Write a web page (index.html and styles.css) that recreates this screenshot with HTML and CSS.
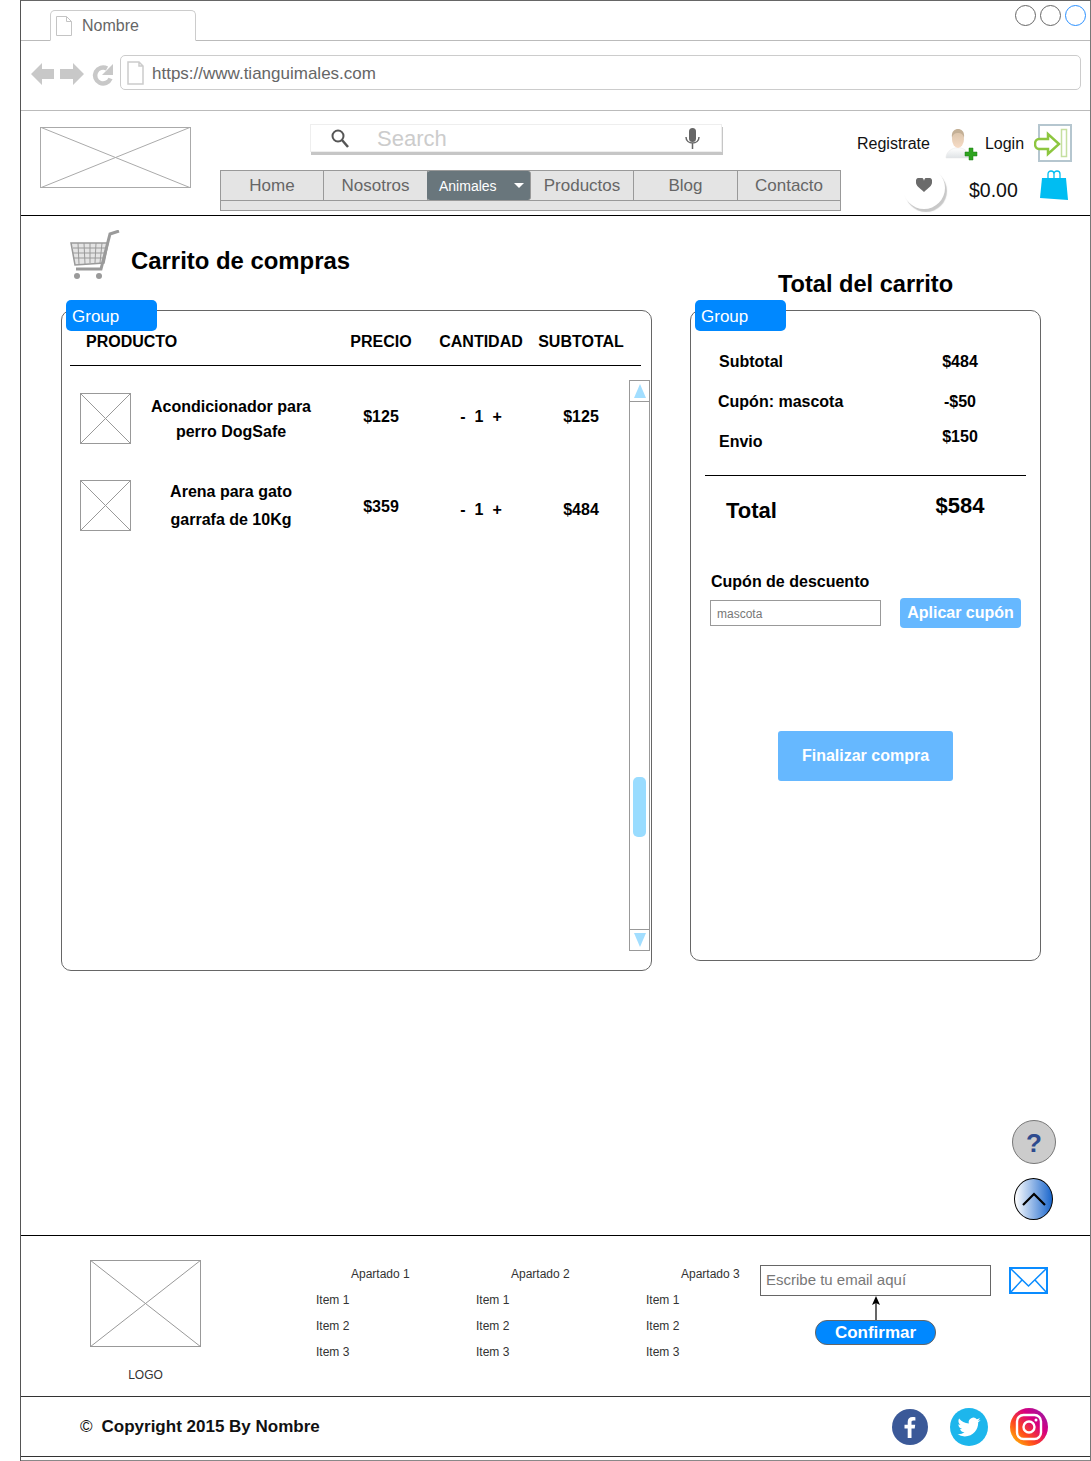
FILE: index.html
```html
<!DOCTYPE html>
<html>
   <head>
      <meta charset="utf-8">
      <title>Carrito de compras</title>
      <link rel="stylesheet" href="styles.css">
   </head>
   <body>
      <div class="page">
         <div class="tabbar">
            <div class="tab">
               <svg class="page-icon" width="16" height="20" viewBox="0 0 16 20"><path d="M.5.5h10l5 5v14H.5zM10.500.5v5h5" fill="#fff" stroke="#c4c4c4"/></svg>
               <span>Nombre</span>
            </div>
            <div class="winbtns">
               <span class="winbtn"></span>
               <span class="winbtn"></span>
               <span class="winbtn winbtn-blue"></span>
            </div>
         </div>

         <div class="addressbar">
            <svg class="navicons" width="83" height="26" viewBox="0 0 83 26">
               <path d="M0 13 11 2v6h12v10H11v6z" fill="#c8c8c8"/>
               <path d="M53 13 42 2v6H29v10h13v6z" fill="#c8c8c8"/>
               <path d="M79.500 17.500A8 8 0 1 1 76 7.500" fill="none" stroke="#c8c8c8" stroke-width="4.500"/>
               <path d="M82 3v11H71z" fill="#c8c8c8"/>
            </svg>
            <div class="urlbox">
               <svg width="17" height="24" viewBox="0 0 17 24"><path d="M1 1h11l4 4v18H1zM12 1v4h4" fill="#fff" stroke="#ccc" stroke-width="1.500"/></svg>
               <span class="urltext">https://www.tianguimales.com</span>
            </div>
         </div>

         <header class="siteheader">
            <svg class="logo" width="151" height="61" viewBox="0 0 151 61" preserveAspectRatio="none">
               <rect x=".5" y=".5" width="150" height="60" fill="#fff" stroke="#aaa"/>
               <path d="M0 0 151 61M151 0 0 61" stroke="#aaa"/>
            </svg>

            <div class="headercenter">
               <div class="search">
                  <svg width="18" height="19" viewBox="0 0 18 19"><circle cx="7" cy="7" r="5.500" fill="none" stroke="#555" stroke-width="2"/><path d="m11 11 6 7" stroke="#555" stroke-width="2.500"/></svg>
                  <span class="search-text">Search</span>
                  <svg class="mic" width="15" height="21" viewBox="0 0 15 21"><rect x="4" y="0" width="7" height="14" rx="3.500" fill="#666"/><path d="M1 9c0 8 13 8 13 0M7.500 15v6" fill="none" stroke="#666" stroke-width="1.500"/></svg>
               </div>
               <nav class="menu">
                  <div class="menu-row">
                     <a class="menu-item">Home</a>
                     <a class="menu-item">Nosotros</a>
                     <a class="menu-item menu-active">Animales <i class="caret"></i></a>
                     <a class="menu-item">Productos</a>
                     <a class="menu-item">Blog</a>
                     <a class="menu-item">Contacto</a>
                  </div>
               </nav>
            </div>

            <div class="account">
               <div class="account-top">
                  <span class="account-link">Registrate</span>
                  <svg class="user-icon" width="33" height="33" viewBox="0 0 33 33">
                     <defs>
                        <linearGradient id="skin" x1="0" y1="0" x2="0" y2="1"><stop offset="0" stop-color="#d8c2a8"/><stop offset="1" stop-color="#f7dcc6"/></linearGradient>
                        <linearGradient id="shirt" x1="0" y1="0" x2="0" y2="1"><stop offset="0" stop-color="#fff"/><stop offset="1" stop-color="#dfe3e6"/></linearGradient>
                     </defs>
                     <path d="M1 29c0-6 5-9 9-10h6c4 1 8 4 8 10z" fill="url(#shirt)" stroke="#e5e5e5" stroke-width=".500"/>
                     <ellipse cx="13" cy="10" rx="6" ry="9" fill="url(#skin)"/>
                     <path d="M7 9C6 2 10 0 13 0s7 2 6 9c-1-4-3-5-6-5S8 5 7 9z" fill="#c4b096"/>
                     <path d="M24 19h4v4h4v4h-4v4h-4v-4h-4v-4h4z" fill="#2ea31f" stroke="#1f7d14" stroke-width=".500"/>
                  </svg>
                  <span class="account-link login-label">Login</span>
                  <svg class="login-icon" width="38" height="38" viewBox="0 0 38 38">
                     <rect x="5" y="1" width="32" height="36" fill="#fff" stroke="#b5c6cf" stroke-width="2"/>
                     <rect x="27.500" y="5.500" width="5" height="27" fill="#fff" stroke="#c5dfa0" stroke-width="1.500"/>
                     <path d="M1 20c0-3 2-5 4-5h9v-5l11 10-11 10v-5H5c-2 0-4-2-4-5z" fill="#fff" stroke="#8dc63f" stroke-width="2.500"/>
                  </svg>
               </div>
               <div class="account-bottom">
                  <div class="wish">
                     <svg width="16" height="14" viewBox="0 0 18 16" preserveAspectRatio="none"><path d="M9 16C4 11 0 9 0 5a4.500 4.500 0 0 1 9-2 4.500 4.500 0 0 1 9 2c0 4-4 6-9 11z" fill="#6b6b6b"/></svg>
                  </div>
                  <span class="cart-sum">$0.00</span>
                  <svg class="bag" width="28" height="30" viewBox="0 0 28 30">
                     <path d="M2 8h24l2 22L0 28z" fill="#00bdf2"/>
                     <path d="M8 11V4c0-4 6-4 6 0v7M14 11V4c0-4 6-4 6 0v7" fill="none" stroke="#00bdf2" stroke-width="1.300"/>
                  </svg>
               </div>
            </div>
         </header>

         <main class="content">
            <div class="columns">
               <section class="col-cart">
                  <div class="cart-title">
                     <svg width="50" height="50" viewBox="0 0 50 50">
                        <path d="M1 13h37l-4 20-29 2z" fill="#e4e4e4" stroke="#9a9a9a" stroke-width="1.500"/>
                        <path d="M3 18h33M3 23h32M4 28h30M8 13l1 21M14 13l1 21M20 13v20M26 13l-1 20M32 13l-2 20" stroke="#9a9a9a"/>
                        <path d="M49 1 40 4 31 39H6" fill="none" stroke="#9a9a9a" stroke-width="3"/>
                        <circle cx="7" cy="46" r="3" fill="#9a9a9a"/>
                        <circle cx="29" cy="46" r="3" fill="#9a9a9a"/>
                     </svg>
                     <h1>Carrito de compras</h1>
                  </div>

                  <div class="panel panel-cart">
                     <div class="group-badge">Group</div>
                     <div class="cart-head">
                        <span class="head-product">PRODUCTO</span>
                        <span>PRECIO</span>
                        <span>CANTIDAD</span>
                        <span>SUBTOTAL</span>
                     </div>
                     <div class="cart-body">
                        <div class="rows">
                           <div class="row">
                              <svg class="thumb" width="51" height="51" viewBox="0 0 51 51"><rect x=".5" y=".5" width="50" height="50" fill="#fff" stroke="#999"/><path d="m0 0 51 51M51 0 0 51" stroke="#999"/></svg>
                              <div class="row-name name-tight">Acondicionador para<br>perro DogSafe</div>
                              <div class="cell cell-up">$125</div>
                              <div class="qty cell-up"><span>-</span><span>1</span><span>+</span></div>
                              <div class="cell cell-sub cell-up">$125</div>
                           </div>
                           <div class="row">
                              <svg class="thumb" width="51" height="51" viewBox="0 0 51 51"><rect x=".5" y=".5" width="50" height="50" fill="#fff" stroke="#999"/><path d="m0 0 51 51M51 0 0 51" stroke="#999"/></svg>
                              <div class="row-name">Arena para gato<br>garrafa de 10Kg</div>
                              <div class="cell cell-mid">$359</div>
                              <div class="qty cell-down"><span>-</span><span>1</span><span>+</span></div>
                              <div class="cell cell-sub cell-down">$484</div>
                           </div>
                        </div>
                        <div class="scrollbar">
                           <div class="scroll-btn"><i class="arrow-up"></i></div>
                           <div class="scroll-track"><div class="scroll-thumb"></div></div>
                           <div class="scroll-btn scroll-btn-down"><i class="arrow-down"></i></div>
                        </div>
                     </div>
                  </div>
               </section>

               <section class="col-total">
                  <h2>Total del carrito</h2>
                  <div class="panel panel-total">
                     <div class="group-badge">Group</div>
                     <div class="sum-row"><span>Subtotal</span><span class="sum-val">$484</span></div>
                     <div class="sum-row"><span class="sum-coupon">Cupón: mascota</span><span class="sum-val">-$50</span></div>
                     <div class="sum-row"><span>Envio</span><span class="sum-val val-up">$150</span></div>
                     <div class="sum-rule"></div>
                     <div class="sum-row total-row"><span>Total</span><span class="sum-val val-up">$584</span></div>
                     <div class="coupon-label">Cupón de descuento</div>
                     <div class="coupon-row">
                        <div class="coupon-field">mascota</div>
                        <button class="btn-light btn-coupon">Aplicar cupón</button>
                     </div>
                     <button class="btn-light btn-finish">Finalizar compra</button>
                  </div>
               </section>
            </div>

            <div class="helpers">
               <div class="help">?</div>
               <div class="totop">
                  <svg width="26" height="15" viewBox="0 0 26 15"><path d="m2 13 11-11 11 11" fill="none" stroke="#000" stroke-width="2.200"/></svg>
               </div>
            </div>
         </main>

         <footer>
            <div class="footer-top">
               <div class="footer-logo">
                  <svg width="111" height="87" viewBox="0 0 111 87"><rect x=".5" y=".5" width="110" height="86" fill="#fff" stroke="#999"/><path d="m0 0 111 87M111 0 0 87" stroke="#999"/></svg>
                  <div class="logo-label">LOGO</div>
               </div>
               <div class="links links-1">
                  <div class="links-title">Apartado 1</div>
                  <div>Item 1</div>
                  <div>Item 2</div>
                  <div>Item 3</div>
               </div>
               <div class="links links-2">
                  <div class="links-title">Apartado 2</div>
                  <div>Item 1</div>
                  <div>Item 2</div>
                  <div>Item 3</div>
               </div>
               <div class="links links-3">
                  <div class="links-title">Apartado 3</div>
                  <div>Item 1</div>
                  <div>Item 2</div>
                  <div>Item 3</div>
               </div>
               <div class="subscribe">
                  <div class="email-field">Escribe tu email aquí</div>
                  <svg width="10" height="24" viewBox="0 0 10 24"><path d="M5 24V6" stroke="#000" stroke-width="1.200"/><path d="M5 0 9 9 5 7 1 9z" fill="#000"/></svg>
                  <button class="btn-confirm">Confirmar</button>
               </div>
               <svg class="mail" width="39" height="27" viewBox="0 0 39 27"><rect x="1" y="1" width="37" height="25" fill="#fff" stroke="#0a8cff" stroke-width="2"/><path d="m1 1 18.500 18L38 1M1 26l12-13M38 26 26 13" fill="none" stroke="#0a8cff" stroke-width="1.500"/></svg>
            </div>

            <div class="footer-bottom">
               <div class="copyright"><span class="copy-mark">©</span>Copyright 2015 By Nombre</div>
               <div class="social">
                  <svg width="36" height="36" viewBox="0 0 36 36"><circle cx="18" cy="18" r="18" fill="#3b5998"/><path d="M19.500 29V19.500h3.200l.5-3.800h-3.700v-2.400c0-1.100.3-1.800 1.900-1.800h2V8.200c-.4 0-1.500-.2-2.900-.2-2.900 0-4.800 1.700-4.800 5v2.700h-3.200v3.800h3.200V29z" fill="#fff"/></svg>
                  <svg width="38" height="38" viewBox="0 0 38 38"><circle cx="19" cy="19" r="19" fill="#1db6ec"/><g transform="translate(7.500 7.500) scale(.96)"><path d="M23.953 4.570a10 10 0 01-2.825.775 4.958 4.958 0 002.163-2.723c-.951.555-2.005.959-3.127 1.184a4.920 4.920 0 00-8.384 4.482C7.690 8.095 4.067 6.130 1.640 3.162a4.822 4.822 0 00-.666 2.475c0 1.710.870 3.213 2.188 4.096a4.904 4.904 0 01-2.228-.616v.060a4.923 4.923 0 003.946 4.827 4.996 4.996 0 01-2.212.085 4.936 4.936 0 004.604 3.417 9.867 9.867 0 01-6.102 2.105c-.390 0-.779-.023-1.170-.067a13.995 13.995 0 007.557 2.209c9.053 0 13.998-7.496 13.998-13.985 0-.210 0-.420-.015-.630A9.935 9.935 0 0024 4.590z" fill="#fff"/></g></svg>
                  <svg width="38" height="38" viewBox="0 0 38 38">
                     <defs>
                        <linearGradient id="insta" x1="0" y1="1" x2="1" y2="0"><stop offset="0" stop-color="#ffd600"/><stop offset=".35" stop-color="#ff4a1c"/><stop offset=".65" stop-color="#d6007f"/><stop offset="1" stop-color="#8a1fb0"/></linearGradient>
                     </defs>
                     <circle cx="19" cy="19" r="19" fill="url(#insta)"/>
                     <rect x="7" y="7" width="24" height="24" rx="6.500" fill="none" stroke="#fff" stroke-width="2.400"/>
                     <circle cx="19" cy="19" r="5.500" fill="none" stroke="#fff" stroke-width="2.400"/>
                     <circle cx="26" cy="12" r="1.500" fill="#fff"/>
                  </svg>
               </div>
            </div>
            <div class="footer-tail"></div>
         </footer>
      </div>
   </body>
</html>
```

FILE: styles.css
```css
html,
body {
   margin: 0;
   padding: 0;
   background: #fff;
}

body {
   font-family: "Liberation Sans", Arial, sans-serif;
   color: #000;
}

button {
   font-family: inherit;
   cursor: pointer;
}

.page {
   width: 1071px;
   margin-left: 20px;
   box-sizing: border-box;
   border-top: 1px solid #666;
   border-left: 1px solid #555;
   border-right: 1px solid #777;
}

/* browser chrome */
.tabbar {
   display: flex;
   align-items: flex-start;
   height: 40px;
   box-sizing: border-box;
   border-bottom: 1px solid #bbb;
   padding-top: 9px;
   padding-left: 29px;
}

.tab {
   display: flex;
   align-items: center;
   gap: 10px;
   width: 146px;
   height: 31px;
   box-sizing: border-box;
   border: 1px solid #ccc;
   border-bottom: 1px solid #fff;
   border-radius: 5px 5px 0 0;
   background: #fff;
   padding-left: 5px;
   font-size: 16px;
   color: #666;
}

.winbtns {
   display: flex;
   gap: 4px;
   margin-left: auto;
   margin-top: -5px;
   margin-right: 4px;
}

.winbtn {
   width: 21px;
   height: 21px;
   box-sizing: border-box;
   border: 1px solid #666;
   border-radius: 50%;
}

.winbtn-blue {
   border-color: #2a90ff;
}

.addressbar {
   display: flex;
   align-items: flex-start;
   height: 70px;
   box-sizing: border-box;
   border-bottom: 1px solid #bbb;
   padding-top: 14px;
   padding-left: 10px;
}

.navicons {
   margin-top: 6px;
   margin-right: 6px;
}

.urlbox {
   display: flex;
   align-items: center;
   gap: 8px;
   width: 961px;
   height: 35px;
   box-sizing: border-box;
   border: 1px solid #ccc;
   border-radius: 5px;
   padding-left: 6px;
   font-size: 17px;
   color: #666;
}

.urltext {
   padding-top: 2px;
}

/* site header */
.siteheader {
   display: flex;
   align-items: flex-start;
   height: 105px;
   box-sizing: border-box;
   border-bottom: 1px solid #000;
}

.logo {
   margin: 16px 29px 0 19px;
}

.headercenter {
   width: 621px;
   padding-top: 13px;
}

.search {
   display: flex;
   align-items: center;
   width: 412px;
   height: 28px;
   box-sizing: border-box;
   margin-left: 90px;
   border: 1px solid #eee;
   box-shadow: 1px 3px 0 #c6c6c6;
   padding-left: 20px;
}

.search-text {
   margin-left: 28px;
   padding-top: 2px;
   font-size: 22px;
   color: #ccc;
}

.mic {
   margin-left: auto;
   margin-right: 21px;
}

.menu {
   height: 41px;
   box-sizing: border-box;
   margin-top: 18px;
   border: 1px solid #999;
   background: #e4e4e4;
}

.menu-row {
   display: grid;
   grid-template-columns: 103px 104px 103px 103px 104px 1fr;
   height: 30px;
   box-sizing: border-box;
   border-bottom: 1px solid #999;
}

.menu-item {
   display: flex;
   align-items: center;
   justify-content: center;
   border-right: 1px solid #999;
   font-size: 17px;
   color: #666;
}

.menu-item:last-child {
   border-right: 0;
}

.menu-active {
   justify-content: flex-start;
   gap: 17px;
   margin-left: -1px;
   padding-left: 12px;
   border-radius: 3px;
   background: #69767c;
   font-size: 14px;
   color: #fff;
}

.caret {
   width: 0;
   height: 0;
   border-left: 5px solid transparent;
   border-right: 5px solid transparent;
   border-top: 5px solid #fff;
}

.account {
   width: 233px;
   box-sizing: border-box;
   padding-left: 16px;
   padding-top: 13px;
   font-size: 16px;
   color: #111;
}

.account-top {
   display: flex;
   align-items: center;
   height: 38px;
}

.account-link {
   padding-top: 2px;
}

.user-icon {
   margin-left: 15px;
   margin-top: 4px;
}

.login-label {
   margin-left: 7px;
}

.login-icon {
   margin-left: 10px;
}

.account-bottom {
   display: flex;
   align-items: flex-start;
   padding-left: 46px;
   margin-top: 6px;
}

.wish {
   display: flex;
   align-items: center;
   justify-content: center;
   width: 42px;
   height: 42px;
   margin-right: 24px;
   margin-top: -1px;
   border-radius: 50%;
   background: #fff;
   box-shadow: 2px 3px 1px #c8c8c8;
}

.wish svg {
   margin-top: -7px;
}

.cart-sum {
   width: 71px;
   margin-top: 11px;
   font-size: 19.500px;
}

.bag {
   margin-top: 2px;
}

/* main */
.content {
   display: flex;
   flex-direction: column;
   height: 1020px;
   box-sizing: border-box;
   border-bottom: 1px solid #000;
}

.columns {
   display: flex;
   gap: 38px;
   padding-left: 40px;
}

.col-cart {
   width: 591px;
   padding-top: 14px;
}

.cart-title {
   display: flex;
   align-items: center;
   gap: 11px;
   height: 50px;
   padding-left: 9px;
   margin-bottom: 30px;
}

.cart-title h1 {
   margin: 12px 0 0;
   font-size: 23.900px;
}

.col-total {
   width: 351px;
   padding-top: 55px;
}

.col-total h2 {
   margin: 0 0 12px;
   font-size: 23.600px;
   line-height: 27px;
   text-align: center;
}

.panel {
   position: relative;
   box-sizing: border-box;
   border: 1px solid #666;
   border-radius: 10px;
}

.panel-cart {
   height: 661px;
}

.panel-total {
   height: 651px;
}

.group-badge {
   position: absolute;
   left: 4px;
   top: -11px;
   width: 91px;
   height: 31px;
   box-sizing: border-box;
   padding-left: 6px;
   border-radius: 5px;
   background: #0088ff;
   color: #fff;
   font-size: 17px;
   line-height: 33px;
}

.cart-head {
   display: grid;
   grid-template-columns: 245px 100px 100px 100px;
   height: 55px;
   box-sizing: border-box;
   margin: 0 10px 0 8px;
   padding-top: 21px;
   padding-left: 16px;
   border-bottom: 1px solid #000;
   font-size: 16px;
   font-weight: bold;
   line-height: 20px;
   text-align: center;
}

.head-product {
   text-align: left;
}

.cart-body {
   display: flex;
   margin-top: 14px;
}

.rows {
   width: 567px;
   box-sizing: border-box;
   padding-top: 13px;
   padding-left: 18px;
}

.row {
   display: grid;
   grid-template-columns: 51px 200px 100px 100px 98px;
   grid-template-rows: 51px;
   align-items: center;
   height: 51px;
   margin-bottom: 36px;
   font-size: 16px;
   font-weight: bold;
   text-align: center;
}

.row-name {
   padding: 0 5px;
   line-height: 28px;
}

.name-tight {
   line-height: 25px;
}

.cell-sub {
   padding-left: 2px;
}

.cell-up {
   margin-bottom: 3px;
}

.cell-mid {
   margin-top: 2px;
}

.cell-down {
   margin-top: 8px;
}

.qty {
   display: flex;
   justify-content: center;
   gap: 9px;
}

.scrollbar {
   display: flex;
   flex-direction: column;
   width: 21px;
   height: 571px;
   box-sizing: border-box;
   border: 1px solid #999;
}

.scroll-btn {
   display: flex;
   align-items: center;
   justify-content: center;
   height: 20px;
   border-bottom: 1px solid #999;
}

.scroll-btn-down {
   border-bottom: 0;
   border-top: 1px solid #999;
}

.arrow-up,
.arrow-down {
   width: 0;
   height: 0;
   border-left: 6px solid transparent;
   border-right: 6px solid transparent;
}

.arrow-up {
   border-bottom: 14px solid #a2deff;
}

.arrow-down {
   border-top: 14px solid #a2deff;
}

.scroll-track {
   flex: 1;
   padding-top: 375px;
   padding-left: 3px;
}

.scroll-thumb {
   width: 13px;
   height: 60px;
   border-radius: 5px;
   background: #99dcff;
}

.sum-row {
   display: grid;
   grid-template-columns: 211px 60px;
   align-items: center;
   height: 40px;
   padding-left: 28px;
   font-size: 16px;
   font-weight: bold;
}

.group-badge + .sum-row {
   margin-top: 31px;
}

.sum-coupon {
   margin-left: -1px;
}

.sum-val {
   text-align: center;
}

.val-up {
   margin-bottom: 10px;
}

.sum-rule {
   width: 321px;
   height: 1px;
   margin-top: 13px;
   margin-left: 14px;
   background: #000;
}

.total-row {
   grid-template-columns: 204px 60px;
   height: 70px;
   padding-left: 35px;
   font-size: 22px;
}

.coupon-label {
   margin-top: 26px;
   padding-left: 20px;
   font-size: 16px;
   font-weight: bold;
   line-height: 20px;
}

.coupon-row {
   display: flex;
   align-items: center;
   gap: 19px;
   margin-top: 6px;
   padding-left: 19px;
}

.coupon-field {
   width: 171px;
   height: 26px;
   box-sizing: border-box;
   border: 1px solid #999;
   padding-left: 6px;
   font-size: 12px;
   line-height: 26px;
   color: #777;
}

.btn-light {
   border: 0;
   background: #66b8ff;
   color: #fff;
   font-size: 16px;
   font-weight: bold;
}

.btn-coupon {
   width: 121px;
   height: 30px;
   padding: 0;
   border-radius: 4px;
}

.btn-finish {
   display: block;
   width: 175px;
   height: 50px;
   margin-top: 103px;
   margin-left: 87px;
   border-radius: 3px;
}

.helpers {
   display: flex;
   flex-direction: column;
   align-items: flex-end;
   gap: 14px;
   margin-top: auto;
   padding-right: 34px;
   padding-bottom: 15px;
}

.help {
   width: 44px;
   height: 44px;
   box-sizing: border-box;
   border: 1px solid #777;
   border-radius: 50%;
   background: #ccc;
   color: #2e4a8e;
   font-size: 26px;
   font-weight: bold;
   line-height: 44px;
   text-align: center;
}

.totop {
   display: flex;
   align-items: center;
   justify-content: center;
   width: 39px;
   height: 42px;
   box-sizing: border-box;
   margin-right: 3px;
   border: 1px solid #000;
   border-radius: 50%;
   background: linear-gradient(90deg, #fff, #1a66cc);
}

/* footer */
.footer-top {
   display: flex;
   align-items: flex-start;
   height: 161px;
   box-sizing: border-box;
   border-bottom: 1px solid #333;
   padding-top: 24px;
   padding-left: 69px;
}

.footer-logo {
   width: 111px;
   margin-right: 115px;
   text-align: center;
}

.footer-logo svg {
   display: block;
}

.logo-label {
   margin-top: 20px;
   font-size: 12px;
   line-height: 16px;
   color: #333;
}

.links {
   box-sizing: border-box;
   padding-top: 1px;
   font-size: 12px;
   line-height: 26px;
   color: #333;
}

.links-1 {
   width: 160px;
}

.links-2 {
   width: 170px;
}

.links-3 {
   width: 114px;
}

.links-title {
   padding-left: 35px;
   white-space: nowrap;
}

.subscribe {
   display: flex;
   flex-direction: column;
   align-items: center;
   width: 231px;
   padding-top: 5px;
}

.email-field {
   width: 231px;
   height: 31px;
   box-sizing: border-box;
   border: 1px solid #666;
   padding-left: 5px;
   font-size: 15px;
   line-height: 28px;
   color: #777;
}

.subscribe svg {
   display: block;
}

.btn-confirm {
   width: 121px;
   height: 25px;
   padding: 0;
   border: 1px solid #666;
   border-radius: 12px;
   background: #0088ff;
   color: #fff;
   font-size: 17px;
   font-weight: bold;
}

.mail {
   margin-top: 7px;
   margin-left: 18px;
}

.footer-bottom {
   display: flex;
   align-items: center;
   height: 60px;
   box-sizing: border-box;
   border-bottom: 1px solid #333;
   padding-left: 59px;
   padding-right: 42px;
}

.copyright {
   font-size: 17px;
   font-weight: bold;
   color: #111;
}

.copy-mark {
   margin-right: 9px;
   font-size: 17px;
   font-weight: normal;
}

.social {
   display: flex;
   align-items: center;
   gap: 22px;
   margin-left: auto;
}

.footer-tail {
   height: 4px;
   box-sizing: border-box;
   border-bottom: 1px solid #888;
}
```
